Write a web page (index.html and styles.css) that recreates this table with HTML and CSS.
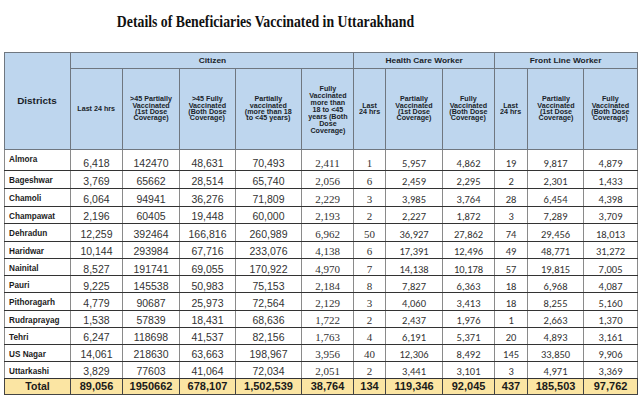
FILE: index.html
```html
<!DOCTYPE html>
<html>
<head>
<meta charset="utf-8">
<link rel="stylesheet" href="styles.css">
</head>
<body>
<div class="page">
  <h1 class="title"><span>Details of Beneficiaries Vaccinated in Uttarakhand</span></h1>
  <table class="grid">
    <colgroup>
      <col style="width:66px"><col style="width:52px"><col style="width:57px"><col style="width:56px"><col style="width:66px"><col style="width:52px">
      <col style="width:32px"><col style="width:57px"><col style="width:52px">
      <col style="width:33px"><col style="width:56px"><col style="width:54px">
    </colgroup>
    <thead>
      <tr class="h1">
        <th rowspan="2" class="dist-h"><span>Districts</span></th>
        <th colspan="5" class="grp"><span>Citizen</span></th>
        <th colspan="3" class="grp"><span>Health Care Worker</span></th>
        <th colspan="3" class="grp"><span>Front Line Worker</span></th>
      </tr>
      <tr class="h2">
        <th><span>Last 24 hrs</span></th>
        <th><span>&gt;45 Partially<br>Vaccinated<br>(1st Dose<br>Coverage)</span></th>
        <th><span>&gt;45 Fully<br>Vaccinated<br>(Both Dose<br>Coverage)</span></th>
        <th><span>Partially<br>vaccinated<br>(more than 18<br>to &lt;45 years)</span></th>
        <th class="tall"><span>Fully<br>Vaccinated<br>more than<br>18 to &lt;45<br>years (Both<br>Dose<br>Coverage)</span></th>
        <th><span>Last<br>24 hrs</span></th>
        <th><span>Partially<br>Vaccinated<br>(1st Dose<br>Coverage)</span></th>
        <th><span>Fully<br>Vaccinated<br>(Both Dose<br>Coverage)</span></th>
        <th><span>Last<br>24 hrs</span></th>
        <th><span>Partially<br>Vaccinated<br>(1st Dose<br>Coverage)</span></th>
        <th><span>Fully<br>Vaccinated<br>(Both Dose<br>Coverage)</span></th>
      </tr>
    </thead>
    <tbody>
      <tr><td class="d">Almora</td><td class="a">6,418</td><td class="a">142470</td><td class="a">48,631</td><td class="a">70,493</td><td class="s">2,411</td><td class="s">1</td><td class="c">5,957</td><td class="c">4,862</td><td class="c">19</td><td class="c">9,817</td><td class="c">4,879</td></tr>
      <tr><td class="d">Bageshwar</td><td class="a">3,769</td><td class="a">65662</td><td class="a">28,514</td><td class="a">65,740</td><td class="s">2,056</td><td class="s">6</td><td class="c">2,459</td><td class="c">2,295</td><td class="c">2</td><td class="c">2,301</td><td class="c">1,433</td></tr>
      <tr><td class="d">Chamoli</td><td class="a">6,064</td><td class="a">94941</td><td class="a">36,276</td><td class="a">71,809</td><td class="s">2,229</td><td class="s">3</td><td class="c">3,985</td><td class="c">3,764</td><td class="c">28</td><td class="c">6,454</td><td class="c">4,398</td></tr>
      <tr><td class="d">Champawat</td><td class="a">2,196</td><td class="a">60405</td><td class="a">19,448</td><td class="a">60,000</td><td class="s">2,193</td><td class="s">2</td><td class="c">2,227</td><td class="c">1,872</td><td class="c">3</td><td class="c">7,289</td><td class="c">3,709</td></tr>
      <tr><td class="d">Dehradun</td><td class="a">12,259</td><td class="a">392464</td><td class="a">166,816</td><td class="a">260,989</td><td class="s">6,962</td><td class="s">50</td><td class="c">36,927</td><td class="c">27,862</td><td class="c">74</td><td class="c">29,456</td><td class="c">18,013</td></tr>
      <tr><td class="d">Haridwar</td><td class="a">10,144</td><td class="a">293984</td><td class="a">67,716</td><td class="a">233,076</td><td class="s">4,138</td><td class="s">6</td><td class="c">17,391</td><td class="c">12,496</td><td class="c">49</td><td class="c">48,771</td><td class="c">31,272</td></tr>
      <tr><td class="d">Nainital</td><td class="a">8,527</td><td class="a">191741</td><td class="a">69,055</td><td class="a">170,922</td><td class="s">4,970</td><td class="s">7</td><td class="c">14,138</td><td class="c">10,178</td><td class="c">57</td><td class="c">19,815</td><td class="c">7,005</td></tr>
      <tr><td class="d">Pauri</td><td class="a">9,225</td><td class="a">145538</td><td class="a">50,983</td><td class="a">75,153</td><td class="s">2,184</td><td class="s">8</td><td class="c">7,827</td><td class="c">6,363</td><td class="c">18</td><td class="c">6,968</td><td class="c">4,087</td></tr>
      <tr><td class="d">Pithoragarh</td><td class="a">4,779</td><td class="a">90687</td><td class="a">25,973</td><td class="a">72,564</td><td class="s">2,129</td><td class="s">3</td><td class="c">4,060</td><td class="c">3,413</td><td class="c">18</td><td class="c">8,255</td><td class="c">5,160</td></tr>
      <tr><td class="d">Rudraprayag</td><td class="a">1,538</td><td class="a">57839</td><td class="a">18,431</td><td class="a">68,636</td><td class="s">1,722</td><td class="s">2</td><td class="c">2,437</td><td class="c">1,976</td><td class="c">1</td><td class="c">2,663</td><td class="c">1,370</td></tr>
      <tr><td class="d">Tehri</td><td class="a">6,247</td><td class="a">118698</td><td class="a">41,537</td><td class="a">82,156</td><td class="s">1,763</td><td class="s">4</td><td class="c">6,191</td><td class="c">5,371</td><td class="c">20</td><td class="c">4,893</td><td class="c">3,161</td></tr>
      <tr><td class="d">US Nagar</td><td class="a">14,061</td><td class="a">218630</td><td class="a">63,663</td><td class="a">198,967</td><td class="s">3,956</td><td class="s">40</td><td class="c">12,306</td><td class="c">8,492</td><td class="c">145</td><td class="c">33,850</td><td class="c">9,906</td></tr>
      <tr><td class="d">Uttarkashi</td><td class="a">3,829</td><td class="a">77603</td><td class="a">41,064</td><td class="a">72,034</td><td class="s">2,051</td><td class="s">2</td><td class="c">3,441</td><td class="c">3,101</td><td class="c">3</td><td class="c">4,971</td><td class="c">3,369</td></tr>
    </tbody>
    <tfoot>
      <tr class="total"><td class="tl">Total</td><td>89,056</td><td>1950662</td><td>678,107</td><td>1,502,539</td><td>38,764</td><td>134</td><td>119,346</td><td>92,045</td><td>437</td><td>185,503</td><td>97,762</td></tr>
    </tfoot>
  </table>
</div>
</body>
</html>
```
FILE: styles.css
```css
html, body {
  margin: 0;
  padding: 0;
  background: #ffffff;
}
.page {
  width: 640px;
  height: 412px;
  padding: 0 3px 0 4px;
  box-sizing: border-box;
  overflow: hidden;
}
.title {
  margin: 0;
  height: 52px;
  padding-top: 12px;
  padding-right: 110px;
  box-sizing: border-box;
  text-align: center;
  font-family: "Liberation Serif", "Times New Roman", serif;
  font-weight: bold;
  font-size: 17px;
  line-height: 20px;
  color: #111;
}
.title span {
  display: inline-block;
  transform: scaleX(0.81);
}
.grid {
  border-collapse: collapse;
  table-layout: fixed;
  width: 633px;
}
.grid th {
  background: #bed6ee;
  border: 1px solid #6f7780;
  font-family: "Liberation Sans", Arial, sans-serif;
  font-weight: bold;
  color: #1a1f2a;
  font-size: 6.5px;
  line-height: 6.4px;
  padding: 0;
  text-align: center;
  vertical-align: middle;
  white-space: nowrap;
}
.grid th span {
  display: inline-block;
  transform: scaleX(1.1);
}
.grid th.tall {
  line-height: 7px;
}
.grid .h1 th {
  height: 15px;
}
.grid .h1 th.grp {
  font-size: 7.6px;
  line-height: 9px;
}
.grid th.dist-h {
  font-size: 9px;
  line-height: 11px;
}
.grid .h2 th {
  height: 80px;
}
.grid tbody tr {
  height: 17px;
}
.grid tbody tr:nth-child(1) { height: 20.5px; }
.grid tbody tr:nth-child(2),
.grid tbody tr:nth-child(3),
.grid tbody tr:nth-child(5) { height: 18px; }
.grid tbody tr:nth-child(7),
.grid tbody tr:nth-child(9) { height: 17.5px; }
.grid td {
  border: 1px solid #8a8a8a;
  border-top-color: #333;
  border-bottom-color: #333;
  padding: 0 2px 0.5px;
  text-align: center;
  vertical-align: bottom;
  color: #222;
  line-height: 11px;
}
.grid td.d {
  text-align: left;
  vertical-align: top;
  padding: 5px 4px 0;
  font-family: "Liberation Sans", Arial, sans-serif;
  font-weight: bold;
  font-size: 8.2px;
  line-height: 9px;
  color: #1c1c1c;
}
.grid td.a {
  font-family: "Liberation Sans", Arial, sans-serif;
  font-size: 10.5px;
  color: #333;
}
.grid td.s {
  font-family: "Liberation Serif", "Times New Roman", serif;
  font-size: 11px;
  color: #333;
}
.grid td.c {
  font-family: Carlito, Calibri, Lato, sans-serif;
  font-size: 10.5px;
  color: #333;
}
.grid .total {
  height: 16px;
}
.grid .total td {
  background: #fbe5a3;
  border: 1px solid #444;
  font-family: "Liberation Sans", Arial, sans-serif;
  font-weight: bold;
  font-size: 11px;
  line-height: 12px;
  color: #1a1a1a;
  vertical-align: middle;
  padding: 0 2px;
}
.grid .total td.tl {
  font-size: 10.5px;
}
```
